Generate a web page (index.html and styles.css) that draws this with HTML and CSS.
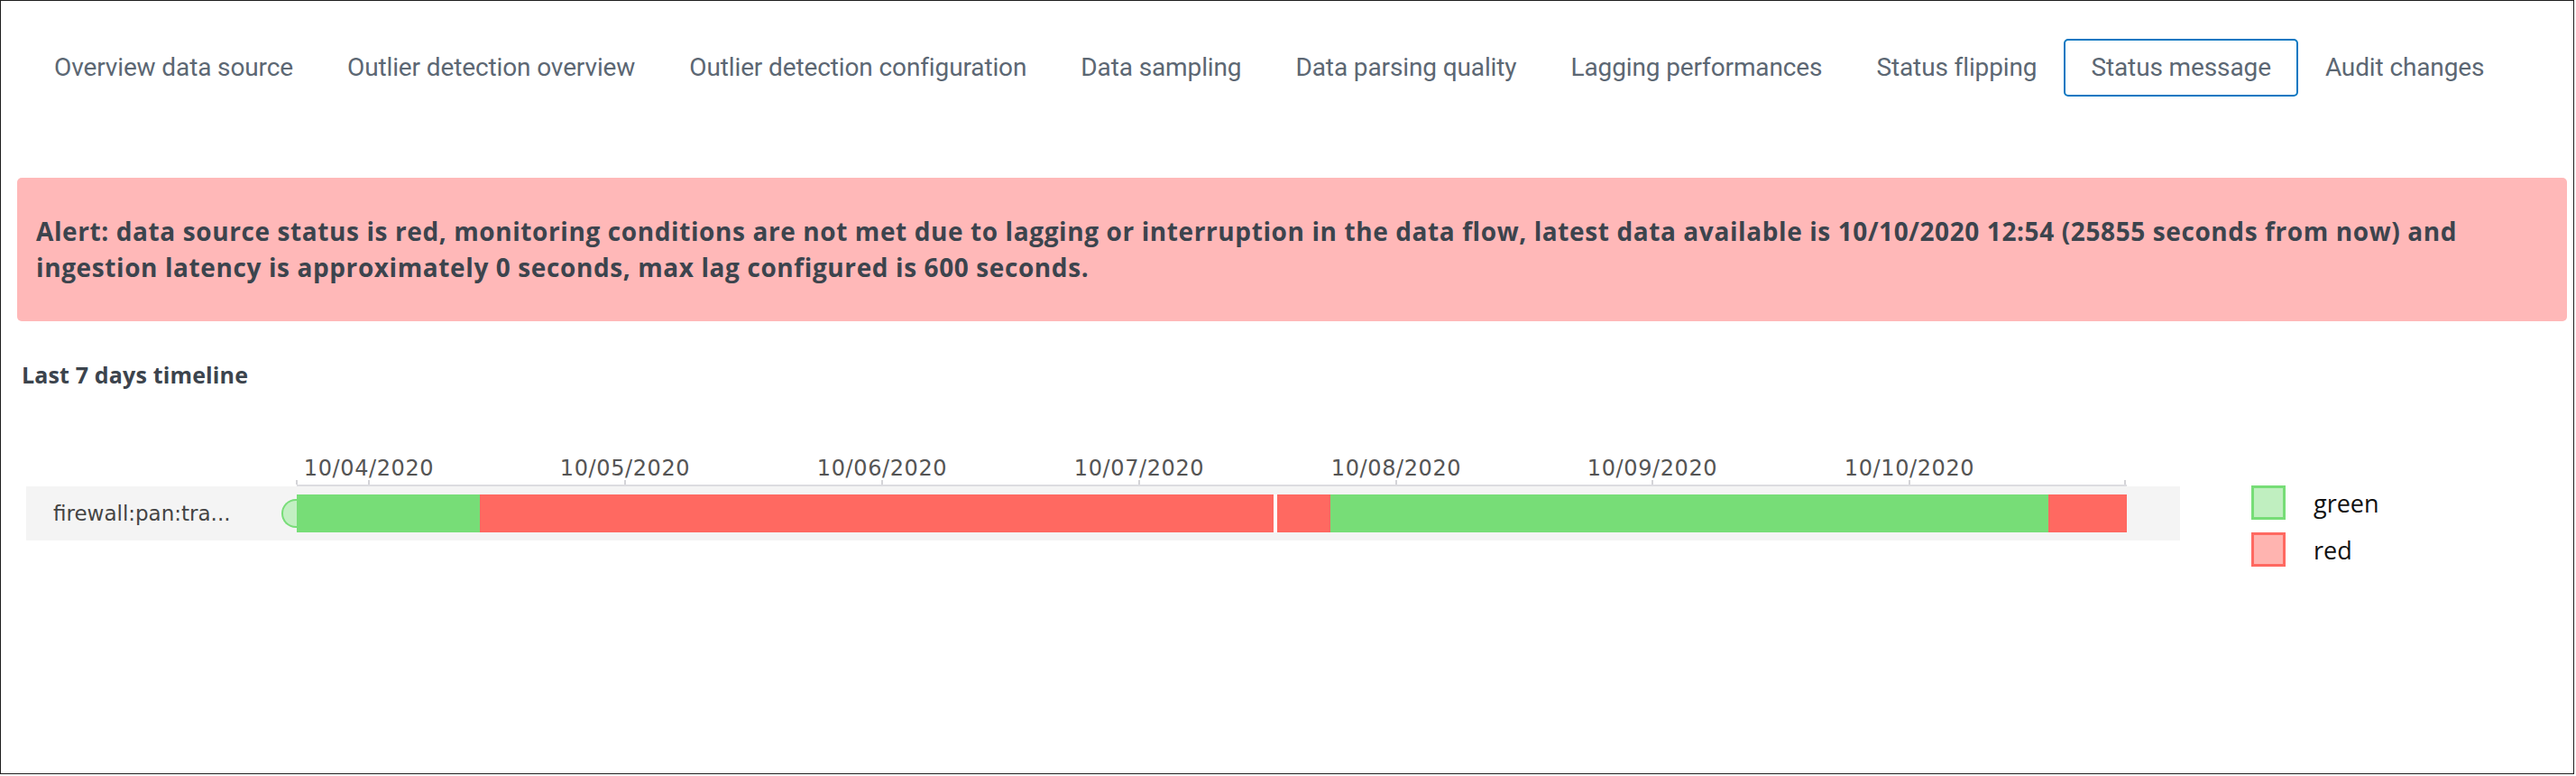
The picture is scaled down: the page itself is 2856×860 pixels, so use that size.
FILE: index.html
```html
<!DOCTYPE html>
<html lang="en">
<head>
<meta charset="utf-8">
<title>Status message</title>
<link rel="stylesheet" href="styles.css">
</head>
<body>
<div class="frame">
  <nav class="tabs">
    <a class="tab">Overview data source</a>
    <a class="tab">Outlier detection overview</a>
    <a class="tab">Outlier detection configuration</a>
    <a class="tab">Data sampling</a>
    <a class="tab">Data parsing quality</a>
    <a class="tab">Lagging performances</a>
    <a class="tab">Status flipping</a>
    <a class="tab active">Status message</a>
    <a class="tab">Audit changes</a>
  </nav>

  <div class="alert"><p class="alert-text">Alert: data source status is red, monitoring conditions are not met due to lagging or interruption in the data flow, latest data available is 10/10/2020 12:54 (25855 seconds from now) and ingestion latency is approximately 0 seconds, max lag configured is 600 seconds.</p></div>

  <h3 class="section-title">Last 7 days timeline</h3>

  <div class="timeline">
    <div class="chart">
      <div class="axis">
        <span class="tick" style="left:0px"></span>
        <span class="tick" style="left:80px"></span>
        <span class="tick" style="left:364px"></span>
        <span class="tick" style="left:649px"></span>
        <span class="tick" style="left:934px"></span>
        <span class="tick" style="left:1219px"></span>
        <span class="tick" style="left:1503px"></span>
        <span class="tick" style="left:1788px"></span>
        <span class="tick" style="left:2027px"></span>
        <span class="date" style="left:80px">10/04/2020</span>
        <span class="date" style="left:364px">10/05/2020</span>
        <span class="date" style="left:649px">10/06/2020</span>
        <span class="date" style="left:934px">10/07/2020</span>
        <span class="date" style="left:1219px">10/08/2020</span>
        <span class="date" style="left:1503px">10/09/2020</span>
        <span class="date" style="left:1788px">10/10/2020</span>
      </div>
      <div class="row">
        <div class="row-label">firewall:pan:tra...</div>
        <div class="bar">
          <span class="seg green" style="width:203px"></span>
          <span class="seg red" style="width:880px"></span>
          <span class="seg red split" style="width:63px"></span>
          <span class="seg green" style="width:796px"></span>
          <span class="seg red" style="width:87px"></span>
        </div>
      </div>
    </div>
    <ul class="legend">
      <li class="legend-item"><span class="swatch swatch-green"></span>green</li>
      <li class="legend-item"><span class="swatch swatch-red"></span>red</li>
    </ul>
  </div>
</div>
</body>
</html>
```

FILE: styles.css
```css
html, body {
  margin: 0;
  padding: 0;
  background: #ffffff;
}

.frame {
  box-sizing: border-box;
  width: 2854px;
  height: 858px;
  border: 1px solid #1e1e1e;
  font-family: Roboto, "Liberation Sans", sans-serif;
  overflow: hidden;
}

/* Tabs */
.tabs {
  display: flex;
  padding: 42px 0 0 29px;
}

.tab {
  box-sizing: border-box;
  height: 64px;
  padding: 0 28px;
  border: 2px solid transparent;
  border-radius: 5px;
  font-size: 28px;
  line-height: 60px;
  letter-spacing: -0.12px;
  color: #5c6773;
  white-space: nowrap;
  cursor: pointer;
}

.tab.active {
  border-color: #0a78c2;
}

/* Alert */
.alert {
  margin: 90px 7px 0 18px;
  padding: 39px 21px 40px;
  background: #ffb8b8;
  border-radius: 5px;
}

.alert-text {
  margin: 0;
  font-family: "Open Sans", Roboto, sans-serif;
  font-weight: 700;
  font-size: 28px;
  line-height: 40px;
  letter-spacing: 0.6px;
  color: #3c444d;
}

/* Section title */
.section-title {
  margin: 44px 0 0 23px;
  font-family: "Open Sans", Roboto, sans-serif;
  font-size: 25px;
  line-height: 30px;
  letter-spacing: 0.15px;
  font-weight: 700;
  color: #3c444d;
}

/* Timeline */
.timeline {
  display: flex;
  padding-left: 28px;
}

.chart {
  width: 2388px;
}

.axis {
  position: relative;
  height: 107px;
  margin-left: 300px;
  width: 2029px;
  border-bottom: 2px solid #dcdce0;
}

.tick {
  position: absolute;
  bottom: 0;
  width: 2px;
  height: 5px;
  margin-left: -1px;
  background: #d4d4d8;
}

.date {
  position: absolute;
  bottom: 3px;
  transform: translateX(-50%);
  font-family: "DejaVu Sans", Verdana, sans-serif;
  font-size: 24px;
  line-height: 30px;
  letter-spacing: 0.6px;
  color: #555555;
  white-space: nowrap;
}

.row {
  display: flex;
  align-items: center;
  height: 60px;
  background: #f4f4f4;
}

.row-label {
  box-sizing: border-box;
  width: 300px;
  padding-left: 30px;
  font-family: "DejaVu Sans", Verdana, sans-serif;
  font-size: 23px;
  color: #444444;
  white-space: nowrap;
}

.bar {
  position: relative;
  display: flex;
  width: 2029px;
  height: 42px;
}

.bar::before {
  content: "";
  position: absolute;
  left: -17px;
  top: 5px;
  box-sizing: border-box;
  width: 17px;
  height: 32px;
  border: 2px solid #78dd78;
  border-right: none;
  border-radius: 16px 0 0 16px;
  background: #c2efc2;
}

.seg {
  display: block;
  height: 100%;
  box-sizing: border-box;
}

.seg.green {
  background: #77dd77;
}

.seg.red {
  background: #ff6961;
}

.seg.split {
  border-left: 4px solid #ffffff;
}

/* Legend */
.legend {
  list-style: none;
  margin: 108px 0 0 79px;
  padding: 0;
  font-family: "Open Sans", "Noto Sans", sans-serif;
  font-size: 27px;
  color: #111111;
}

.legend-item {
  display: flex;
  align-items: center;
  gap: 31px;
  height: 38px;
  margin-bottom: 14px;
}

.swatch {
  box-sizing: border-box;
  width: 38px;
  height: 38px;
  border: 3px solid;
}

.swatch-green {
  background: #c0efc0;
  border-color: #77dd77;
}

.swatch-red {
  background: #ffb4b0;
  border-color: #ff6961;
}
```
